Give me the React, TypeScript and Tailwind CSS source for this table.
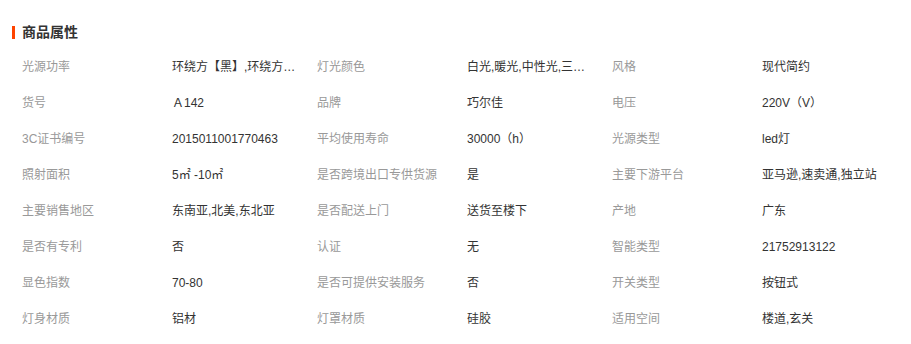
import React from "react";

const rows: [string, string][][] = [
  [["光源功率", "环绕方【黑】,环绕方…"], ["灯光颜色", "白光,暖光,中性光,三…"], ["风格", "现代简约"]],
  [["货号", "Ａ142"], ["品牌", "巧尔佳"], ["电压", "220V（V）"]],
  [["3C证书编号", "2015011001770463"], ["平均使用寿命", "30000（h）"], ["光源类型", "led灯"]],
  [["照射面积", "5㎡ -10㎡"], ["是否跨境出口专供货源", "是"], ["主要下游平台", "亚马逊,速卖通,独立站"]],
  [["主要销售地区", "东南亚,北美,东北亚"], ["是否配送上门", "送货至楼下"], ["产地", "广东"]],
  [["是否有专利", "否"], ["认证", "无"], ["智能类型", "21752913122"]],
  [["显色指数", "70-80"], ["是否可提供安装服务", "否"], ["开关类型", "按钮式"]],
  [["灯身材质", "铝材"], ["灯罩材质", "硅胶"], ["适用空间", "楼道,玄关"]],
];

export default function App() {
  return (
    <div
      className="w-[911px] h-[344px] bg-white pt-[20px] pl-[12px]"
      style={{ fontFamily: '"Liberation Sans", "Noto Sans CJK SC", sans-serif' }}
    >
      <div className="flex items-center h-[24px]">
        <div className="w-[3px] h-[13px] bg-[#ff4400]" />
        <div className="ml-[7px] text-[14px] font-bold text-[#333333]">商品属性</div>
      </div>
      <div className="mt-[5px] pl-[10px]">
        {rows.map((row, i) => (
          <div
            key={i}
            className="grid grid-cols-[150px_145px_150px_145px_150px_145px] h-[36px] items-center text-[12px]"
          >
            {row.map(([k, v], j) => (
              <React.Fragment key={j}>
                <div className="text-[#999999] whitespace-nowrap">{k}</div>
                <div className="text-[#333333] whitespace-nowrap">{v}</div>
              </React.Fragment>
            ))}
          </div>
        ))}
      </div>
    </div>
  );
}
